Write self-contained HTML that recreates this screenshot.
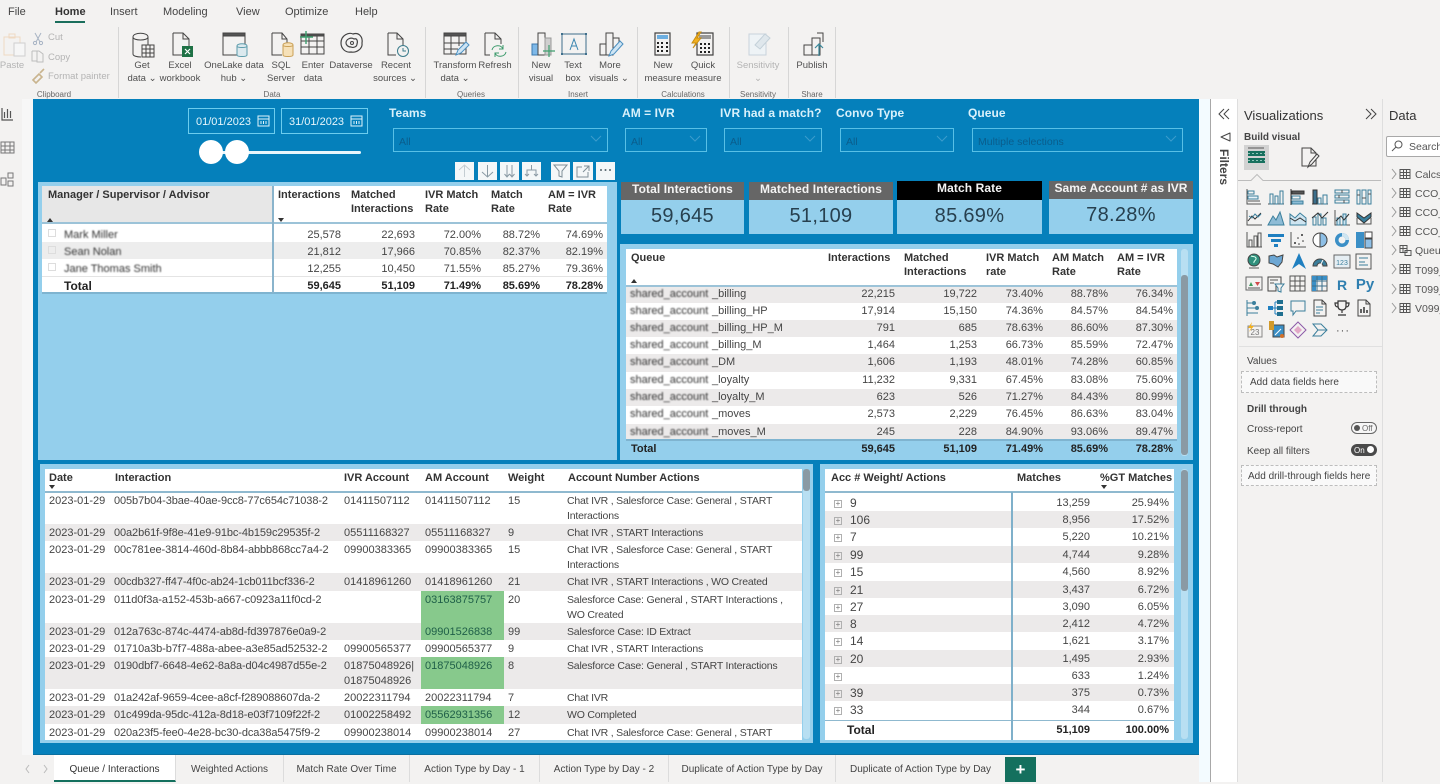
<!DOCTYPE html>
<html><head><meta charset="utf-8"><title>Queue / Interactions</title>
<style>
*{box-sizing:border-box}
html,body{margin:0;padding:0}
body{width:1440px;height:782px;overflow:hidden;background:#f3f2f1;position:relative;font-family:"Liberation Sans",sans-serif;color:#3a3a3a}
.a{position:absolute}
.t{position:absolute;white-space:nowrap;line-height:14px;margin-top:1px}
.c{transform:translateX(-50%)}
.rb{font-size:9.5px;color:#505050}
.gl{font-size:8px;color:#666}
.dis{color:#b4b4b4}
.tab{font-size:11px;color:#444}
.sl{font-size:12px;font-weight:bold;color:#d9f1fb;letter-spacing:.05px}
.dd{position:absolute;top:128px;height:24px;border:1.5px solid #58c0e6;font-size:10.5px;color:#0a5d8c;padding:7px 0 0 5px}
.dd svg{position:absolute;right:5px;top:6px}
.dt{position:absolute;top:108px;height:26px;border:1.5px solid #6ccdee;font-size:11px;color:#e6f6fc;padding:7px 0 0 7px}
.dt svg{position:absolute;right:3px;top:5px}
.vb{position:absolute;top:162px;width:19px;height:18px;background:#f4f7f8}
.vb svg{position:absolute;left:2px;top:2px}
.ph{position:absolute;background:#666;color:#f4f4f4;font-weight:bold;font-size:12px;letter-spacing:.1px;text-align:center;line-height:15px;height:18px}
.pb{position:absolute;background:#94cfec;color:#27404f;font-size:20px;letter-spacing:.3px;text-align:center;top:200px;height:34px;line-height:32px}
table{position:absolute;border-collapse:collapse;table-layout:fixed;font-size:11px;color:#454545}
td{padding:0 4px;white-space:nowrap;overflow:hidden;text-align:right;vertical-align:top;line-height:16px}
td.l{text-align:left}
.s td{background:#eceaea}
.b td{font-weight:bold;color:#222}
.h{font-size:11px;font-weight:bold;color:#333;line-height:14px}
.bl{filter:blur(.9px);display:inline-block;vertical-align:top;height:16px;overflow:hidden}
.g{background:#87c98c!important;color:#1f5f48}
#bt td{padding-top:2px;line-height:15px}
#bt td:nth-child(2){letter-spacing:-.1px}
#bt td:nth-child(6){font-size:10.5px;letter-spacing:-.2px}
.tb{position:absolute;top:755px;height:27px;font-size:10px;color:#444;text-align:center;line-height:29px;border-right:1px solid #dcdcdc}
.dl{position:absolute;left:1415px;font-size:10.5px;color:#555;line-height:14px;width:25px;overflow:hidden;white-space:nowrap}
.box{position:absolute;left:1241px;width:136px;border:1px dashed #bdbdbd;font-size:10px;color:#444;line-height:22px}
.bx td{vertical-align:middle;line-height:16px}
.pm{display:inline-block;width:8px;height:8px;border:1px solid #b0b0b0;margin:0 8px 0 5px;font-size:8px;line-height:6px;text-align:center;color:#777;vertical-align:1px}
</style></head><body>

<!-- ribbon tabs -->
<div class="t tab" style="left:8px;top:4px">File</div>
<div class="t tab" style="left:55px;top:4px;font-weight:bold;color:#333">Home</div>
<div class="a" style="left:55px;top:21px;width:30px;height:2px;background:#1a6e5c"></div>
<div class="t tab" style="left:110px;top:4px">Insert</div>
<div class="t tab" style="left:163px;top:4px">Modeling</div>
<div class="t tab" style="left:236px;top:4px">View</div>
<div class="t tab" style="left:285px;top:4px">Optimize</div>
<div class="t tab" style="left:355px;top:4px">Help</div>

<!-- ribbon icons -->
<svg class="a" style="left:0;top:0" width="840" height="99" fill="none" stroke="#444" stroke-width="1">
<g stroke="#d6d6d6"><path d="M118.5 27v71M425.5 27v71M518.5 27v71M637.5 27v71M729.5 27v71M788.5 27v71M835.5 27v71"/></g>
<!-- paste -->
<path d="M4 37h16v18H4z" stroke="#efd9c2"/><path d="M9 34h6v4H9z" stroke="#efd9c2"/><path d="M14 43h11v13H14z" stroke="#cfcfcf" fill="#f6f6f6"/>
<path d="M35 33l5 9M41 33l-5 9" stroke="#a8b4c4"/><circle cx="35" cy="43" r="1.6" stroke="#a8b4c4"/><circle cx="41" cy="43" r="1.6" stroke="#a8b4c4"/>
<path d="M32 51h7l4 3v8H37v-11" stroke="#bdbdbd"/><path d="M32 51v10h5" stroke="#bdbdbd"/>
<path d="M33 80l6-6 3 3-6 6zM40 73l4-4" stroke="#c9b48e" stroke-width="1.6"/>
<!-- get data -->
<path d="M133 37v17c0 2 4 3 8 3M133 37c0-5 15-5 15 0v8M133 37c0 4 15 4 15 0"/>
<path d="M142 45h12v12h-12zM146 45v12M150 45v12M142 49h12M142 53h12" fill="#f3f2f1"/>
<!-- excel -->
<path d="M173 33h10l6 6v9M173 33v22h9M183 33v6h6"/><rect x="182" y="46" width="11" height="11" fill="#1e7145" stroke="none"/><path d="M185 49l5 5M190 49l-5 5" stroke="#fff" stroke-width="1.2"/>
<!-- onelake -->
<path d="M223 33h22v22h-22z"/><path d="M223 33h22v3h-22z" fill="#555"/><path d="M237 46c0-3 10-3 10 0v9c0 2-10 2-10 0z" fill="#dbe9ee" stroke="#5b9bab"/><path d="M237 46c0 2 10 2 10 0" stroke="#5b9bab"/>
<!-- sql -->
<path d="M272 33h10l5 6v4M272 33v22h10M282 33v6h5"/><path d="M283 45c0-3 10-3 10 0v10c0 2-10 2-10 0z" fill="#f6e1b8" stroke="#caa055"/><path d="M283 45c0 2 10 2 10 0" stroke="#caa055"/>
<!-- enter -->
<path d="M301 34h23v20h-23zM301 41h23M301 47h23M309 34v20M317 34v20"/><path d="M301 34h23v2h-23z" fill="#555"/><path d="M306 31v13M300 37h13" stroke="#3ea06f" stroke-width="1.4"/>
<!-- dataverse -->
<path d="M341 43c0-8 8-11 12-9 6-2 10 3 9 9 1 6-6 10-11 9-6 1-10-4-10-9z" stroke-width="1.2"/><path d="M346 43c0-4 5-6 8-4 3-1 4 2 3 5 0 3-4 4-6 3-3 0-5-2-5-4z" stroke-width="1.2"/><circle cx="352" cy="43" r="1.5"/>
<!-- recent -->
<path d="M388 33h9l6 6v7M388 33v22h8M397 33v6h6"/><circle cx="403" cy="51" r="5.5" fill="#f3f2f1" stroke="#3c7c8c"/><path d="M403 48v3h3" stroke="#3c7c8c"/>
<!-- transform -->
<path d="M444 33h22v21h-22z"/><path d="M444 33h22v3h-22z" fill="#555"/><path d="M444 43h22M444 49h14M451 36v18M459 36v10"/><path d="M456 55l2-5 8-8 3 3-8 8z" fill="#cfe5f4" stroke="#4a8fc0"/>
<!-- refresh -->
<path d="M485 33h10l6 6v5M485 33v22h5M495 33v6h6"/><path d="M492 50c1-5 9-6 11-1M506 52c-1 5-9 6-11 1M503 45v4h-4M495 57v-4h4" stroke="#3c9a6c"/>
<!-- new visual -->
<rect x="532" y="44" width="6" height="11" fill="#7db8e8" stroke="#3c7ab0"/><path d="M538 33h7v22h-7z"/><rect x="545" y="38" width="6" height="17" fill="#cfcfcf" stroke="#999"/><path d="M549 45v12M543 51h12" stroke="#3ea06f" stroke-width="1.2"/>
<!-- text box -->
<path d="M562 34h24v20h-24z" stroke="#3f6f8c"/><path d="M570 50l4-11 4 11M571.5 46h5" stroke="#3b86b0"/>
<g fill="#3f6f8c" stroke="none"><rect x="561" y="33" width="2" height="2"/><rect x="585" y="33" width="2" height="2"/><rect x="561" y="53" width="2" height="2"/><rect x="585" y="53" width="2" height="2"/></g>
<!-- more visuals -->
<path d="M600 44h6v11h-6zM606 33h7v22h-7zM613 38h6v5"/><path d="M609 56l2-5 9-10 3 3-9 10z" fill="#cfe5f4" stroke="#4a8fc0"/>
<!-- new measure -->
<path d="M655 33h15v22h-15z" stroke-width="1.2"/><rect x="657" y="35" width="11" height="4" fill="#6caee0" stroke="none"/><path d="M657 43h2M661 43h2M666 43h2M657 47h2M661 47h2M666 47h2M657 51h2M661 51h2M666 51h2" stroke="#222" stroke-width="2"/>
<!-- quick measure -->
<path d="M697 33h16v22h-16z" stroke-width="1.2"/><rect x="699" y="35" width="12" height="4" fill="#999" stroke="none"/><path d="M700 44h2M704 44h2M708 44h2M700 48h2M704 48h2M708 48h2M700 52h2M704 52h2M708 52h2" stroke="#222" stroke-width="2"/>
<path d="M699 32l-7 11h4l-3 5 8-10h-4l4-6z" fill="#f2b01e" stroke="#c88d10"/>
<!-- sensitivity -->
<path d="M749 34h17v21h-17z" stroke="#c8d3dc" fill="#eef3f6"/><path d="M755 45l10-11 5 4-10 11z" stroke="#c3d0d8" fill="#dfe7ec"/>
<!-- publish -->
<path d="M804 45h8v10h-8zM812 38h8v17h-8zM817 33h6v9"/><path d="M819 56V44M815 48l4-4 4 4" stroke="#3c8a9c" stroke-width="1.2"/>
</svg>

<div class="t rb dis c" style="left:12px;top:58px">Paste</div>
<div class="t rb dis" style="left:48px;top:30px">Cut</div>
<div class="t rb dis" style="left:48px;top:50px">Copy</div>
<div class="t rb dis" style="left:48px;top:69px">Format painter</div>
<div class="t gl c" style="left:54px;top:87px">Clipboard</div>
<div class="t rb c" style="left:142px;top:58px">Get</div><div class="t rb c" style="left:142px;top:71px">data ⌄</div>
<div class="t rb c" style="left:180px;top:58px">Excel</div><div class="t rb c" style="left:180px;top:71px">workbook</div>
<div class="t rb c" style="left:234px;top:58px">OneLake data</div><div class="t rb c" style="left:234px;top:71px">hub ⌄</div>
<div class="t rb c" style="left:281px;top:58px">SQL</div><div class="t rb c" style="left:281px;top:71px">Server</div>
<div class="t rb c" style="left:313px;top:58px">Enter</div><div class="t rb c" style="left:313px;top:71px">data</div>
<div class="t rb c" style="left:351px;top:58px">Dataverse</div>
<div class="t rb c" style="left:396px;top:58px">Recent</div><div class="t rb c" style="left:395px;top:71px">sources ⌄</div>
<div class="t gl c" style="left:272px;top:87px">Data</div>
<div class="t rb c" style="left:455px;top:58px">Transform</div><div class="t rb c" style="left:455px;top:71px">data ⌄</div>
<div class="t rb c" style="left:495px;top:58px">Refresh</div>
<div class="t gl c" style="left:471px;top:87px">Queries</div>
<div class="t rb c" style="left:541px;top:58px">New</div><div class="t rb c" style="left:541px;top:71px">visual</div>
<div class="t rb c" style="left:573px;top:58px">Text</div><div class="t rb c" style="left:573px;top:71px">box</div>
<div class="t rb c" style="left:610px;top:58px">More</div><div class="t rb c" style="left:609px;top:71px">visuals ⌄</div>
<div class="t gl c" style="left:578px;top:87px">Insert</div>
<div class="t rb c" style="left:663px;top:58px">New</div><div class="t rb c" style="left:663px;top:71px">measure</div>
<div class="t rb c" style="left:703px;top:58px">Quick</div><div class="t rb c" style="left:703px;top:71px">measure</div>
<div class="t gl c" style="left:683px;top:87px">Calculations</div>
<div class="t rb dis c" style="left:758px;top:58px">Sensitivity</div><div class="t rb dis c" style="left:758px;top:71px">⌄</div>
<div class="t gl c" style="left:758px;top:87px">Sensitivity</div>
<div class="t rb c" style="left:812px;top:58px">Publish</div>
<div class="t gl c" style="left:812px;top:87px">Share</div>

<!-- left rail -->
<div class="a" style="left:22px;top:99px;width:11px;height:656px;background:#f7f7f7"></div>
<svg class="a" style="left:0;top:105px" width="22" height="90" fill="none" stroke="#555">
<path d="M2 3v12h11M4.500 7v6M7.500 4v9M10.500 6v7" stroke-width="1.2"/>
<path d="M1 37h13v11H1zM1 41h13M1 45h13M5 37v11M10 37v11" stroke="#777"/>
<path d="M1 73h5v7H1zM8 68h5v5H8zM8 76h5v5H8z" stroke="#777"/>
</svg>

<!-- canvas -->
<div class="a" style="left:33px;top:99px;width:1166px;height:656px;background:#0580bb;border-bottom:1px solid #0a6f9f"></div>

<!-- slicers -->
<div class="dt" style="left:188px;width:87px">01/01/2023<svg width="14" height="13" fill="none" stroke="#dff4fb"><path d="M1 2h11v10H1zM1 5h11M4 7v3M6.500 7v3M9 7v3"/></svg></div>
<div class="dt" style="left:281px;width:87px">31/01/2023<svg width="14" height="13" fill="none" stroke="#dff4fb"><path d="M1 2h11v10H1zM1 5h11M4 7v3M6.500 7v3M9 7v3"/></svg></div>
<div class="a" style="left:211px;top:150.500px;width:150px;height:3px;background:#e8f6fc;border-radius:2px"></div>
<div class="a" style="left:199px;top:140px;width:24px;height:24px;border-radius:50%;background:#fff"></div>
<div class="a" style="left:225px;top:140px;width:24px;height:24px;border-radius:50%;background:#fff"></div>
<div class="t sl" style="left:389px;top:105px">Teams</div>
<div class="t sl" style="left:622px;top:105px">AM = IVR</div>
<div class="t sl" style="left:720px;top:105px">IVR had a match?</div>
<div class="t sl" style="left:836px;top:105px">Convo Type</div>
<div class="t sl" style="left:968px;top:105px">Queue</div>
<div class="dd" style="left:393px;width:215px">All<svg width="12" height="8" fill="none" stroke="#3c9ccc"><path d="M1 1l5 5 5-5"/></svg></div>
<div class="dd" style="left:625px;width:82px">All<svg width="12" height="8" fill="none" stroke="#3c9ccc"><path d="M1 1l5 5 5-5"/></svg></div>
<div class="dd" style="left:724px;width:98px">All<svg width="12" height="8" fill="none" stroke="#3c9ccc"><path d="M1 1l5 5 5-5"/></svg></div>
<div class="dd" style="left:840px;width:114px">All<svg width="12" height="8" fill="none" stroke="#3c9ccc"><path d="M1 1l5 5 5-5"/></svg></div>
<div class="dd" style="left:972px;width:211px">Multiple selections<svg width="12" height="8" fill="none" stroke="#3c9ccc"><path d="M1 1l5 5 5-5"/></svg></div>

<!-- visual header -->
<div class="vb" style="left:455px"><svg width="15" height="14" fill="none" stroke="#c4cdd2"><path d="M7.500 13V1M2 6l5.500-5L13 6"/></svg></div>
<div class="vb" style="left:478px"><svg width="15" height="14" fill="none" stroke="#8a9aa4"><path d="M7.500 1v12M2 8l5.500 5L13 8"/></svg></div>
<div class="vb" style="left:500px"><svg width="15" height="14" fill="none" stroke="#8a9aa4"><path d="M5 1v12M2.500 10L5 13l2.500-3M10 1v12M7.500 10l2.500 3 2.500-3"/></svg></div>
<div class="vb" style="left:522px"><svg width="15" height="14" fill="none" stroke="#8a9aa4"><path d="M7.500 1v5M3 12V6h9v6M1 10l2 2 2-2M10 10l2 2 2-2"/></svg></div>
<div class="vb" style="left:551px"><svg width="15" height="14" fill="none" stroke="#7f8f98"><path d="M1 1h13L9 7v6l-3-1V7z"/></svg></div>
<div class="vb" style="left:573px;width:20px"><svg width="15" height="14" fill="none" stroke="#7f8f98"><path d="M13 8v5H2V3h5M9 2h5v5M14 2L8 8"/></svg></div>
<div class="vb" style="left:596px"><svg width="15" height="14" fill="#55656e"><circle cx="3" cy="6" r="1"/><circle cx="7.500" cy="6" r="1"/><circle cx="12" cy="6" r="1"/></svg></div>

<!-- panel 1 -->
<div class="a" style="left:38px;top:182px;width:579px;height:278px;background:#94cfec"></div>
<div class="a" style="left:42px;top:186px;width:565px;height:108px;background:#fff;border-bottom:2px solid #7fb4d0"></div>
<div class="a" style="left:42px;top:186px;width:231px;height:36px;background:#e7e7e7"></div>
<div class="a" style="left:42px;top:222px;width:565px;height:1.500px;background:#9cc3d8"></div>
<div class="a" style="left:42px;top:242px;width:565px;height:17px;background:#ededed"></div>
<div class="a" style="left:42px;top:276px;width:565px;height:1px;background:#e4e4e4"></div>
<div class="a" style="left:272px;top:186px;width:1.500px;height:107px;background:#8ab4cc"></div>
<div class="t h" style="left:48px;top:187px">Manager / Supervisor / Advisor</div>
<div class="t h" style="left:278px;top:187px">Interactions</div>
<div class="t h" style="left:351px;top:187px">Matched<br>Interactions</div>
<div class="t h" style="left:425px;top:187px">IVR Match<br>Rate</div>
<div class="t h" style="left:491px;top:187px">Match<br>Rate</div>
<div class="t h" style="left:548px;top:187px">AM = IVR<br>Rate</div>
<svg class="a" style="left:46px;top:214px" width="240" height="8" fill="#333"><path d="M4 4l3 4H1zM232 4h6l-3 4z"/></svg>
<table style="left:42px;top:227px;width:565px"><col style="width:231px"><col style="width:72px"><col style="width:74px"><col style="width:66px"><col style="width:59px"><col style="width:63px">
<tr style="height:17px"><td class="l" style="padding-left:5px"><span class="pm" style="margin-left:1px;border-color:#ddd"></span><span class="bl" style="color:#333">Mark Miller</span></td><td>25,578</td><td>22,693</td><td>72.00%</td><td>88.72%</td><td>74.69%</td></tr>
<tr style="height:17px"><td class="l" style="padding-left:5px"><span class="pm" style="margin-left:1px;border-color:#ddd"></span><span class="bl" style="color:#333">Sean Nolan</span></td><td>21,812</td><td>17,966</td><td>70.85%</td><td>82.37%</td><td>82.19%</td></tr>
<tr style="height:17px"><td class="l" style="padding-left:5px"><span class="pm" style="margin-left:1px;border-color:#ddd"></span><span class="bl" style="color:#333">Jane Thomas Smith</span></td><td>12,255</td><td>10,450</td><td>71.55%</td><td>85.27%</td><td>79.36%</td></tr>
<tr class="b" style="height:16px"><td class="l" style="padding-left:22px;font-size:12px">Total</td><td>59,645</td><td>51,109</td><td>71.49%</td><td>85.69%</td><td>78.28%</td></tr>
</table>

<!-- KPI -->
<div class="ph" style="left:621px;top:182px;width:123px">Total Interactions</div><div class="pb" style="left:621px;width:123px">59,645</div>
<div class="ph" style="left:749px;top:182px;width:144px">Matched Interactions</div><div class="pb" style="left:749px;width:144px">51,109</div>
<div class="ph" style="left:897px;top:181px;width:145px;height:19px;background:#000">Match Rate</div><div class="pb" style="left:897px;width:145px">85.69%</div>
<div class="ph" style="left:1049px;top:181px;width:144px;letter-spacing:0">Same Account # as IVR</div><div class="pb" style="left:1049px;top:199px;height:35px;width:144px">78.28%</div>

<!-- queue panel -->
<div class="a" style="left:620px;top:244px;width:573px;height:216px;background:#94cfec"></div>
<div class="a" style="left:626px;top:249px;width:551px;height:36px;background:#fff"></div>
<div class="a" style="left:626px;top:285px;width:551px;height:154px;background:#fff"></div>
<div class="a" style="left:1181px;top:249px;width:7px;height:207px;background:#b8dff2;border-radius:3px"></div>
<div class="a" style="left:1181px;top:275px;width:7px;height:180px;background:#8a9aa4;border-radius:3px"></div>
<div class="t h" style="left:631px;top:250px">Queue</div>
<div class="t h" style="left:828px;top:250px">Interactions</div>
<div class="t h" style="left:904px;top:250px">Matched<br>Interactions</div>
<div class="t h" style="left:986px;top:250px">IVR Match<br>rate</div>
<div class="t h" style="left:1052px;top:250px">AM Match<br>Rate</div>
<div class="t h" style="left:1117px;top:250px">AM = IVR<br>Rate</div>
<svg class="a" style="left:630px;top:278px" width="8" height="6" fill="#333"><path d="M4 1l3 4H1z"/></svg>
<table style="left:626px;top:286px;width:551px"><col style="width:196px"><col style="width:77px"><col style="width:82px"><col style="width:66px"><col style="width:65px"><col style="width:65px">
<tr class="s" style="height:17px"><td class="l"><span class="bl" style="width:82px;color:#333">shared_account</span>_billing</td><td>22,215</td><td>19,722</td><td>73.40%</td><td>88.78%</td><td>76.34%</td></tr>
<tr style="height:17px"><td class="l"><span class="bl" style="width:82px;color:#333">shared_account</span>_billing_HP</td><td>17,914</td><td>15,150</td><td>74.36%</td><td>84.57%</td><td>84.54%</td></tr>
<tr class="s" style="height:17px"><td class="l"><span class="bl" style="width:82px;color:#333">shared_account</span>_billing_HP_M</td><td>791</td><td>685</td><td>78.63%</td><td>86.60%</td><td>87.30%</td></tr>
<tr style="height:17px"><td class="l"><span class="bl" style="width:82px;color:#333">shared_account</span>_billing_M</td><td>1,464</td><td>1,253</td><td>66.73%</td><td>85.59%</td><td>72.47%</td></tr>
<tr class="s" style="height:18px"><td class="l"><span class="bl" style="width:82px;color:#333">shared_account</span>_DM</td><td>1,606</td><td>1,193</td><td>48.01%</td><td>74.28%</td><td>60.85%</td></tr>
<tr style="height:17px"><td class="l"><span class="bl" style="width:82px;color:#333">shared_account</span>_loyalty</td><td>11,232</td><td>9,331</td><td>67.45%</td><td>83.08%</td><td>75.60%</td></tr>
<tr class="s" style="height:17px"><td class="l"><span class="bl" style="width:82px;color:#333">shared_account</span>_loyalty_M</td><td>623</td><td>526</td><td>71.27%</td><td>84.43%</td><td>80.99%</td></tr>
<tr style="height:18px"><td class="l"><span class="bl" style="width:82px;color:#333">shared_account</span>_moves</td><td>2,573</td><td>2,229</td><td>76.45%</td><td>86.63%</td><td>83.04%</td></tr>
<tr class="s" style="height:16px"><td class="l"><span class="bl" style="width:82px;color:#333">shared_account</span>_moves_M</td><td>245</td><td>228</td><td>84.90%</td><td>93.06%</td><td>89.47%</td></tr>
<tr class="b" style="height:17px"><td class="l" style="padding-left:5px;padding-top:1px">Total</td><td style="padding-top:1px">59,645</td><td style="padding-top:1px">51,109</td><td style="padding-top:1px">71.49%</td><td style="padding-top:1px">85.69%</td><td style="padding-top:1px">78.28%</td></tr>
</table>
<div class="a" style="left:626px;top:285px;width:551px;height:1.500px;background:#9cc3d8"></div>
<div class="a" style="left:626px;top:439px;width:551px;height:1.500px;background:#7fb4d0"></div>

<!-- bottom-left panel -->
<div class="a" style="left:40px;top:464px;width:773px;height:279px;background:#94cfec"></div>
<div class="a" style="left:45px;top:469px;width:757px;height:271px;background:#fff"></div>
<div class="a" style="left:45px;top:491px;width:757px;height:1.500px;background:#8fb9cf"></div>
<div class="a" style="left:803px;top:469px;width:7px;height:270px;background:#b8dff2;border-radius:3px"></div>
<div class="a" style="left:803px;top:469px;width:7px;height:22px;background:#8a9aa4;border-radius:3px"></div>
<div class="t h" style="left:49px;top:470px">Date</div>
<div class="t h" style="left:115px;top:470px">Interaction</div>
<div class="t h" style="left:344px;top:470px">IVR Account</div>
<div class="t h" style="left:425px;top:470px">AM Account</div>
<div class="t h" style="left:508px;top:470px">Weight</div>
<div class="t h" style="left:568px;top:470px">Account Number Actions</div>
<svg class="a" style="left:48px;top:485px" width="8" height="5" fill="#333"><path d="M1 0h6L4 4z"/></svg>
<div class="a" style="left:45px;top:492px;width:757px;height:248px;overflow:hidden">
<table id="bt" style="left:0;top:0;width:757px"><col style="width:65px"><col style="width:230px"><col style="width:81px"><col style="width:83px"><col style="width:59px"><col style="width:239px">
<tr style="height:32px"><td class="l">2023-01-29</td><td class="l">005b7b04-3bae-40ae-9cc8-77c654c71038-2</td><td class="l">01411507112</td><td class="l">01411507112</td><td class="l">15</td><td class="l">Chat IVR , Salesforce Case: General , START<br>Interactions</td></tr>
<tr class="s" style="height:17px"><td class="l">2023-01-29</td><td class="l">00a2b61f-9f8e-41e9-91bc-4b159c29535f-2</td><td class="l">05511168327</td><td class="l">05511168327</td><td class="l">9</td><td class="l">Chat IVR , START Interactions</td></tr>
<tr style="height:32px"><td class="l">2023-01-29</td><td class="l">00c781ee-3814-460d-8b84-abbb868cc7a4-2</td><td class="l">09900383365</td><td class="l">09900383365</td><td class="l">15</td><td class="l">Chat IVR , Salesforce Case: General , START<br>Interactions</td></tr>
<tr class="s" style="height:18px"><td class="l">2023-01-29</td><td class="l">00cdb327-ff47-4f0c-ab24-1cb011bcf336-2</td><td class="l">01418961260</td><td class="l">01418961260</td><td class="l">21</td><td class="l">Chat IVR , START Interactions , WO Created</td></tr>
<tr style="height:32px"><td class="l">2023-01-29</td><td class="l">011d0f3a-a152-453b-a667-c0923a11f0cd-2</td><td class="l"></td><td class="l g">03163875757</td><td class="l">20</td><td class="l">Salesforce Case: General , START Interactions ,<br>WO Created</td></tr>
<tr class="s" style="height:17px"><td class="l">2023-01-29</td><td class="l">012a763c-874c-4474-ab8d-fd397876e0a9-2</td><td class="l"></td><td class="l g">09901526838</td><td class="l">99</td><td class="l">Salesforce Case: ID Extract</td></tr>
<tr style="height:17px"><td class="l">2023-01-29</td><td class="l">01710a3b-b7f7-488a-abee-a3e85ad52532-2</td><td class="l">09900565377</td><td class="l">09900565377</td><td class="l">9</td><td class="l">Chat IVR , START Interactions</td></tr>
<tr class="s" style="height:32px"><td class="l">2023-01-29</td><td class="l">0190dbf7-6648-4e62-8a8a-d04c4987d55e-2</td><td class="l">01875048926|<br>01875048926</td><td class="l g">01875048926</td><td class="l">8</td><td class="l">Salesforce Case: General , START Interactions</td></tr>
<tr style="height:17px"><td class="l">2023-01-29</td><td class="l">01a242af-9659-4cee-a8cf-f289088607da-2</td><td class="l">20022311794</td><td class="l">20022311794</td><td class="l">7</td><td class="l">Chat IVR</td></tr>
<tr class="s" style="height:18px"><td class="l">2023-01-29</td><td class="l">01c499da-95dc-412a-8d18-e03f7109f22f-2</td><td class="l">01002258492</td><td class="l g">05562931356</td><td class="l">12</td><td class="l">WO Completed</td></tr>
<tr style="height:17px"><td class="l">2023-01-29</td><td class="l">020a23f5-fee0-4e28-bc30-dca38a5475f9-2</td><td class="l">09900238014</td><td class="l">09900238014</td><td class="l">27</td><td class="l">Chat IVR , Salesforce Case: General , START</td></tr>
</table></div>

<!-- bottom-right panel -->
<div class="a" style="left:820px;top:464px;width:373px;height:279px;background:#94cfec"></div>
<div class="a" style="left:825px;top:469px;width:349px;height:271px;background:#fff"></div>
<div class="a" style="left:825px;top:491px;width:349px;height:1.500px;background:#8fb9cf"></div>
<div class="a" style="left:1181px;top:469px;width:7px;height:270px;background:#b8dff2;border-radius:3px"></div>
<div class="a" style="left:1181px;top:470px;width:7px;height:121px;background:#8a9aa4;border-radius:3px"></div>
<div class="t h" style="left:831px;top:470px">Acc # Weight/ Actions</div>
<div class="t h" style="left:1017px;top:470px">Matches</div>
<div class="t h" style="left:1100px;top:470px">%GT Matches</div>
<svg class="a" style="left:1100px;top:485px" width="8" height="5" fill="#333"><path d="M1 0h6L4 4z"/></svg>
<table class="bx" style="left:825px;top:494px;width:349px"><col style="width:187px"><col style="width:82px"><col style="width:80px">
<tr style="height:17px"><td class="l" style="font-size:12px"><span class="pm">+</span>9</td><td>13,259</td><td style="padding-right:5px">25.94%</td></tr>
<tr class="s" style="height:17px"><td class="l" style="font-size:12px"><span class="pm">+</span>106</td><td>8,956</td><td style="padding-right:5px">17.52%</td></tr>
<tr style="height:18px"><td class="l" style="font-size:12px"><span class="pm">+</span>7</td><td>5,220</td><td style="padding-right:5px">10.21%</td></tr>
<tr class="s" style="height:17px"><td class="l" style="font-size:12px"><span class="pm">+</span>99</td><td>4,744</td><td style="padding-right:5px">9.28%</td></tr>
<tr style="height:18px"><td class="l" style="font-size:12px"><span class="pm">+</span>15</td><td>4,560</td><td style="padding-right:5px">8.92%</td></tr>
<tr class="s" style="height:17px"><td class="l" style="font-size:12px"><span class="pm">+</span>21</td><td>3,437</td><td style="padding-right:5px">6.72%</td></tr>
<tr style="height:17px"><td class="l" style="font-size:12px"><span class="pm">+</span>27</td><td>3,090</td><td style="padding-right:5px">6.05%</td></tr>
<tr class="s" style="height:17px"><td class="l" style="font-size:12px"><span class="pm">+</span>8</td><td>2,412</td><td style="padding-right:5px">4.72%</td></tr>
<tr style="height:18px"><td class="l" style="font-size:12px"><span class="pm">+</span>14</td><td>1,621</td><td style="padding-right:5px">3.17%</td></tr>
<tr class="s" style="height:17px"><td class="l" style="font-size:12px"><span class="pm">+</span>20</td><td>1,495</td><td style="padding-right:5px">2.93%</td></tr>
<tr style="height:17px"><td class="l" style="font-size:12px"><span class="pm">+</span></td><td>633</td><td style="padding-right:5px">1.24%</td></tr>
<tr class="s" style="height:17px"><td class="l" style="font-size:12px"><span class="pm">+</span>39</td><td>375</td><td style="padding-right:5px">0.73%</td></tr>
<tr style="height:17px"><td class="l" style="font-size:12px"><span class="pm">+</span>33</td><td>344</td><td style="padding-right:5px">0.67%</td></tr>
</table>
<div class="a" style="left:825px;top:720px;width:349px;height:1px;background:#8fb9cf"></div>
<div class="a" style="left:1011px;top:492px;width:1.500px;height:248px;background:#7fb0ca"></div>
<div class="t" style="left:847px;top:722px;font-size:12px;font-weight:bold;color:#222">Total</div>
<div class="t" style="left:1012px;width:78px;text-align:right;top:722px;font-size:11px;font-weight:bold;color:#222">51,109</div>
<div class="t" style="left:1094px;width:75px;text-align:right;top:722px;font-size:11px;font-weight:bold;color:#222">100.00%</div>

<!-- page tabs -->
<svg class="a" style="left:24px;top:764px" width="26" height="10" fill="none" stroke="#bbb"><path d="M5 1L2 5l3 4M20 1l3 4-3 4"/></svg>
<div class="tb" style="left:54px;width:122px;background:#fff;color:#333;border-bottom:2px solid #14705e">Queue / Interactions</div>
<div class="tb" style="left:176px;width:108px">Weighted Actions</div>
<div class="tb" style="left:284px;width:126px">Match Rate Over Time</div>
<div class="tb" style="left:410px;width:130px">Action Type by Day - 1</div>
<div class="tb" style="left:540px;width:129px">Action Type by Day - 2</div>
<div class="tb" style="left:669px;width:167px">Duplicate of Action Type by Day</div>
<div class="tb" style="left:836px;width:169px;border-right:0">Duplicate of Action Type by Day</div>
<div class="a" style="left:1005px;top:757px;width:31px;height:25px;background:#14705e;color:#fff;font-size:17px;font-weight:bold;text-align:center;line-height:25px">+</div>

<!-- right panes -->
<div class="a" style="left:1199px;top:99px;width:11px;height:683px;background:#f3fbff"></div>
<div class="a" style="left:1210px;top:99px;width:28px;height:683px;background:#fff;border-left:1px solid #a8a8a8;border-right:1px solid #dedede"></div>
<div class="a" style="left:1238px;top:99px;width:145px;height:683px;background:#f3f2f1;border-right:1px solid #dedede"></div>
<div class="a" style="left:1383px;top:99px;width:57px;height:683px;background:#f3f2f1"></div>
<svg class="a" style="left:1218px;top:108px" width="18" height="40" fill="none" stroke="#444"><path d="M6 1L1 6l5 5M11 1L6 6l5 5"/><path d="M3 29l9-4v8z" stroke-linejoin="round"/></svg>
<div class="t" style="left:1224px;top:165.500px;font-size:12px;font-weight:bold;color:#444;transform:translate(-50%,-50%) rotate(90deg)">Filters</div>
<div class="t" style="left:1244px;top:108px;font-size:13px;color:#333">Visualizations</div>
<svg class="a" style="left:1365px;top:108px" width="12" height="12" fill="none" stroke="#444"><path d="M1 1l5 5-5 5M6 1l5 5-5 5"/></svg>
<div class="t" style="left:1389px;top:108px;font-size:13px;color:#333">Data</div>
<div class="t" style="left:1244px;top:130px;font-size:10px;color:#444;font-weight:bold">Build visual</div>
<div class="a" style="left:1386px;top:136px;width:60px;height:21px;background:#fff;border:1px solid #a8a8a8;border-radius:2px"></div>
<svg class="a" style="left:1391px;top:140px" width="12" height="12" fill="none" stroke="#555"><circle cx="7.500" cy="4.500" r="3.500"/><path d="M5 7l-4 4"/></svg>
<div class="t" style="left:1409px;top:139px;font-size:10.5px;color:#555">Search</div>

<!-- data list -->
<svg class="a" style="left:1390px;top:165px" width="22" height="155" fill="none" stroke="#999">
<path d="M2 4l4 5-4 5M2 23l4 5-4 5M2 42l4 5-4 5M2 61l4 5-4 5M2 80l4 5-4 5M2 99l4 5-4 5M2 119l4 5-4 5M2 138l4 5-4 5"/>
<g stroke="#555"><path d="M10 4.500h10v9H10zM10 7.500h10M10 10.500h10M13.500 4.500v9M16.500 4.500v9"/>
<path d="M10 23.500h10v9H10zM10 26.500h10M10 29.500h10M13.500 23.500v9M16.500 23.500v9"/>
<path d="M10 42.500h10v9H10zM10 45.500h10M10 48.500h10M13.500 42.500v9M16.500 42.500v9"/>
<path d="M10 61.500h10v9H10zM10 64.500h10M10 67.500h10M13.500 61.500v9M16.500 61.500v9"/>
<path d="M10 80.500h7v7h-7zM10 83.500h7M13 80.500v7M15 85.500h6v5h-6z"/>
<path d="M10 99.500h10v9H10zM10 102.500h10M10 105.500h10M13.500 99.500v9M16.500 99.500v9"/>
<path d="M10 119.500h10v9H10zM10 122.500h10M10 125.500h10M13.500 119.500v9M16.500 119.500v9"/>
<path d="M10 138.500h10v9H10zM10 141.500h10M10 144.500h10M13.500 138.500v9M16.500 138.500v9"/></g>
</svg>
<div class="dl" style="top:168px">Calcs</div>
<div class="dl" style="top:187px">CCO_T</div>
<div class="dl" style="top:206px">CCO_T</div>
<div class="dl" style="top:225px">CCO_V</div>
<div class="dl" style="top:244px">Queue</div>
<div class="dl" style="top:264px">T099_</div>
<div class="dl" style="top:283px">T099_</div>
<div class="dl" style="top:302px">V099_</div>

<!-- viz pane icons -->
<svg class="a" style="left:1238px;top:140px" width="145" height="210" fill="none" stroke="#555" stroke-width="1">
<rect x="6" y="5" width="25" height="25" fill="#d2d2d2" stroke="none"/>
<path d="M10 8h16" stroke="#555"/><rect x="10" y="11" width="17" height="5" fill="#17705e" stroke="none"/><rect x="10" y="18" width="17" height="5" fill="#17705e" stroke="none"/><path d="M10 13.500h17M10 20.500h17" stroke="#8fc4b8" stroke-dasharray="2 2"/>
<path d="M64 8h9l5 5v13h-14z M73 8v5h5" stroke="#444"/><path d="M70 27l2-5 7-8 2 2-7 8z" stroke="#444" fill="#f3f2f1"/>
<path d="M0 40.500h13l6-6 6 6h118" stroke="#bcbcbc"/>
<!-- row1 y57 -->
<g transform="translate(8,49)"><path d="M1 0v15h14"/><rect x="2" y="2" width="6" height="3" stroke="#3b7f9c"/><rect x="2" y="7" width="10" height="3" fill="#e5f1f8" stroke="#3b7f9c"/><path d="M2 12h12"/></g>
<g transform="translate(30,49)"><path d="M0 15h16"/><path d="M2 5h3v10H2zM7 7h3v8H7zM12 2h3v13h-3z" stroke="#3b7f9c"/></g>
<g transform="translate(52,49)"><path d="M1 0v16" stroke="#333"/><path d="M2 2h12v3H2z" fill="#555" stroke="#333"/><path d="M2 7h8v3H2z" stroke="#3b7f9c"/><path d="M2 12h11v3H2z" fill="#8ebcd6" stroke="#3b7f9c"/></g>
<g transform="translate(74,49)"><path d="M0 15h16"/><path d="M1 1h4v14H1z" fill="#3b6f8c" stroke="#333"/><path d="M6 9h3v6H6zM11 6h4v9h-4z" stroke="#3b7f9c"/></g>
<g transform="translate(96,49)"><path d="M1 1h14v3H1zM1 6h14v3H1zM1 11h14v3H1z" stroke="#3b7f9c"/><path d="M8 1v3M5 6v3M10 11v3"/></g>
<g transform="translate(118,49)"><path d="M1 1h3v14H1zM6 1h4v14H6zM12 1h3v14h-3z" stroke="#3b7f9c"/><path d="M1 6h3M6 9h4M12 5h3"/></g>
<!-- row2 y78 -->
<g transform="translate(8,70)"><path d="M1 0v15h15"/><path d="M2 11l4-5 3 3 6-6" stroke="#333"/><path d="M3 6l3 2 3-4 3 3 3-3" stroke="#3b7f9c"/></g>
<g transform="translate(30,70)"><path d="M0 15l5-9 3 4 4-8 4 13z" fill="#8ebcd6" stroke="#3b7f9c"/></g>
<g transform="translate(52,70)"><path d="M0 4l5 4 5-5 6 5v7H0z" fill="#cfe5f1" stroke="#3b7f9c"/><path d="M0 8l5 3 5-3 6 4"  stroke="#333"/></g>
<g transform="translate(74,70)"><path d="M1 7h3v8H1zM6 4h3v11H6zM11 8h3v7h-3z" stroke="#3b7f9c"/><path d="M0 8l6-5 4 5 6-6" stroke="#333"/></g>
<g transform="translate(96,70)"><path d="M1 0v15h15"/><path d="M3 8h3v7H3zM9 4h3v11H9z" fill="#cfe5f1" stroke="#3b7f9c"/><path d="M2 11l5-5 3 4 5-6" stroke="#333"/></g>
<g transform="translate(118,70)"><path d="M1 3l7 5 7-5v4l-7 6-7-6z" fill="#3b7f9c" stroke="#333"/><path d="M1 8v6h14V8"/></g>
<!-- row3 y100 -->
<g transform="translate(8,92)"><path d="M1 0v15h15"/><path d="M3 8h3v7H3zM8 4h3v11H8zM12 1h3v14h-3z" stroke="#555"/></g>
<g transform="translate(30,92)"><rect x="0" y="2" width="16" height="3" fill="#1f7fc0" stroke="none"/><rect x="3" y="7" width="10" height="3" fill="#1f7fc0" stroke="none"/><rect x="6" y="12" width="4" height="3" fill="#1f7fc0" stroke="none"/></g>
<g transform="translate(52,92)"><path d="M1 0v15h15"/><g fill="#333" stroke="none"><circle cx="5" cy="11" r="1"/><circle cx="8" cy="6" r=".8"/><circle cx="12" cy="3" r="1"/><circle cx="13" cy="9" r=".8"/><circle cx="9" cy="12" r=".8"/></g></g>
<g transform="translate(74,92)"><circle cx="8" cy="8" r="7" fill="#fff" stroke="#444"/><path d="M8 1a7 7 0 0 1 7 7 7 7 0 0 1-7 7z" fill="#8ebfe6" stroke="#444"/></g>
<g transform="translate(96,92)"><circle cx="8" cy="8" r="7" fill="#3b8fc6" stroke="none"/><circle cx="8" cy="8" r="3.500" fill="#f3f2f1" stroke="none"/><path d="M8 1a7 7 0 0 1 7 7h-3.500A3.500 3.500 0 0 0 8 4.500z" fill="#cfe5f1" stroke="none"/></g>
<g transform="translate(118,92)"><rect x="0" y="0" width="8" height="16" fill="#3b8fc6" stroke="none"/><rect x="9" y="0" width="7" height="6" fill="#fff" stroke="#444"/><rect x="9" y="7" width="7" height="9" fill="#8ebfe6" stroke="#444"/></g>
<!-- row4 y122 -->
<g transform="translate(8,113)"><circle cx="8" cy="7" r="6" fill="#2f8f7c" stroke="#444"/><path d="M5 3c2 1 4 0 5 2s-3 3-2 5" stroke="#dfe" /><path d="M3 15h10"/></g>
<g transform="translate(30,113)"><path d="M1 3l5-1 3 2 6-2-1 7-4 5-5-3-4-1z" fill="#6da7d4" stroke="#444"/></g>
<g transform="translate(53,113)"><path d="M8 0l7 16-7-5-7 5z" fill="#1f7fc0" stroke="none"/></g>
<g transform="translate(74,115)"><path d="M1 11a7 7 0 0 1 14 0h-4a3 3 0 0 0-6 0z" fill="#3b7f9c" stroke="#444"/><path d="M8 11l3-6" stroke="#fff"/></g>
<g transform="translate(96,114)"><rect x="0" y="1" width="16" height="13" fill="#e6eef3" stroke="#666"/><text x="8" y="11" font-size="7" text-anchor="middle" fill="#3b7f9c" stroke="none" font-family="Liberation Sans,sans-serif">123</text></g>
<g transform="translate(118,114)"><rect x="0" y="0" width="15" height="15" stroke="#555"/><path d="M3 4h9M3 8h6M3 11h9" stroke="#3b7f9c"/></g>
<!-- row5 y144 -->
<g transform="translate(8,137)"><rect x="0" y="0" width="16" height="13" stroke="#666"/><path d="M3 9l2-4 2 4z" fill="#3a9a5c" stroke="none"/><path d="M9 5h5l-2.500 4z" fill="#d04a4a" stroke="none"/><path d="M2 11h12"/></g>
<g transform="translate(30,136)"><path d="M0 1h13v9H8v5H0z" stroke="#444"/><path d="M2 4h8M2 7h4"/><path d="M7 8h9l-3 4v4l-3-1v-3z" fill="#f3f2f1" stroke="#3b7f9c"/></g>
<g transform="translate(52,136)"><path d="M0 0h15v15H0zM0 5h15M0 10h15M5 0v15M10 0v15" stroke="#555"/></g>
<g transform="translate(74,136)"><path d="M0 0h15v15H0z" stroke="#555"/><path d="M0 0h15v4H0zM0 0h4v15H0z" fill="#3b8fc6" stroke="none"/><path d="M0 5h15M0 10h15M5 0v15M10 0v15" stroke="#3b6f8c"/></g>
<!-- row6 y168 -->
<g transform="translate(8,160)"><path d="M1 0v16M1 3h5M1 8h8M1 13h11" stroke="#3b7f9c"/><circle cx="8" cy="3" r="2" fill="#3b7f9c" stroke="none"/><circle cx="11" cy="8" r="2" fill="#3b7f9c" stroke="none"/></g>
<g transform="translate(30,160)"><rect x="0" y="6" width="5" height="4" fill="#1f7fc0" stroke="none"/><rect x="9" y="0" width="6" height="4" fill="#1f6f90" stroke="none"/><rect x="9" y="6" width="6" height="4" fill="#1f6f90" stroke="none"/><rect x="9" y="12" width="6" height="4" fill="#1f6f90" stroke="none"/><path d="M5 8h4M7 2h2M7 14h2M7 2v12" stroke="#1f7fc0"/></g>
<g transform="translate(52,160)"><path d="M1 1h14v10H6l-3 4v-4H1z" stroke="#3b7f9c"/></g>
<g transform="translate(74,160)"><path d="M2 0h8l4 4v12H2zM10 0v4h4" stroke="#444"/><path d="M4 7h7M4 10h7M4 13h4" stroke="#3b7f9c"/></g>
<g transform="translate(96,160)"><path d="M4 1h8v5c0 3-2 4-4 4s-4-1-4-4zM4 3H1c0 3 1 4 3 4M12 3h3c0 3-1 4-3 4M8 10v3M4 15h8" stroke="#333" stroke-width="1.200"/></g>
<g transform="translate(118,160)"><path d="M2 0h8l4 4v12H2zM10 0v4h4" stroke="#444"/><path d="M5 13V9M8 13V7M11 13v-3" stroke="#333" stroke-width="1.500"/></g>
<!-- row7 y190 -->
<g transform="translate(8,182)"><rect x="2" y="4" width="14" height="11" stroke="#888"/><text x="9" y="13" font-size="8" text-anchor="middle" fill="#777" stroke="none" font-family="Liberation Sans,sans-serif">23</text><path d="M6 0L2 6h3L3 10l5-6H5z" fill="#f2b01e" stroke="none"/></g>
<g transform="translate(30,181)"><rect x="5" y="4" width="11" height="12" fill="#3b8fc6" stroke="#444"/><path d="M7 14l6-6" stroke="#fff"/><rect x="1" y="0" width="5" height="9" fill="#d29a2a" stroke="none"/><circle cx="14" cy="15" r="2" fill="#d2702a" stroke="none"/></g>
<g transform="translate(52,182)"><path d="M8 0l8 8-8 8-8-8z" stroke="#8c5aa8"/><path d="M8 4l4 4-4 4-4-4z" fill="#e2a8c8" stroke="none"/></g>
<g transform="translate(74,182)"><path d="M1 2h8l6 6-6 6H1l5-6z" stroke="#3b7f9c"/><path d="M6 8h9" stroke="#3b7f9c"/></g>
</svg>
<div class="t" style="left:1342px;top:277px;font-size:14px;font-weight:bold;color:#2f7fb0;transform:translateX(-50%)">R</div>
<div class="t" style="left:1365px;top:277px;font-size:15px;font-weight:bold;color:#2f7fb0;transform:translateX(-50%)">Py</div>
<div class="t" style="left:1343px;top:323px;font-size:11px;color:#444;letter-spacing:1px;transform:translateX(-50%)">···</div>

<div class="a" style="left:1239px;top:346px;width:143px;height:1px;background:#e0e0e0"></div>
<div class="t" style="left:1247px;top:354px;font-size:10px;color:#444">Values</div>
<div class="box" style="top:371px;height:22px;padding-left:8px;background:#f9f9f9">Add data fields here</div>
<div class="t" style="left:1247px;top:402px;font-size:10px;font-weight:bold;color:#444">Drill through</div>
<div class="t" style="left:1247px;top:422px;font-size:10px;color:#444">Cross-report</div>
<div class="a" style="left:1351px;top:422px;width:26px;height:12px;border:1px solid #666;border-radius:6px;background:#f6f6f6"></div>
<div class="a" style="left:1354px;top:425px;width:6px;height:6px;border-radius:50%;background:#555"></div>
<div class="t" style="left:1362px;top:421px;font-size:8px;color:#666">Off</div>
<div class="t" style="left:1247px;top:444px;font-size:10px;color:#444">Keep all filters</div>
<div class="a" style="left:1351px;top:444px;width:26px;height:12px;border-radius:6px;background:#4a4a4a"></div>
<div class="t" style="left:1354px;top:443px;font-size:8px;color:#fff">On</div>
<div class="a" style="left:1367px;top:446px;width:7px;height:7px;border-radius:50%;background:#fff"></div>
<div class="box" style="top:465px;height:21px;padding-left:6px;background:#f9f9f9;line-height:21px">Add drill-through fields here</div>
</body></html>
